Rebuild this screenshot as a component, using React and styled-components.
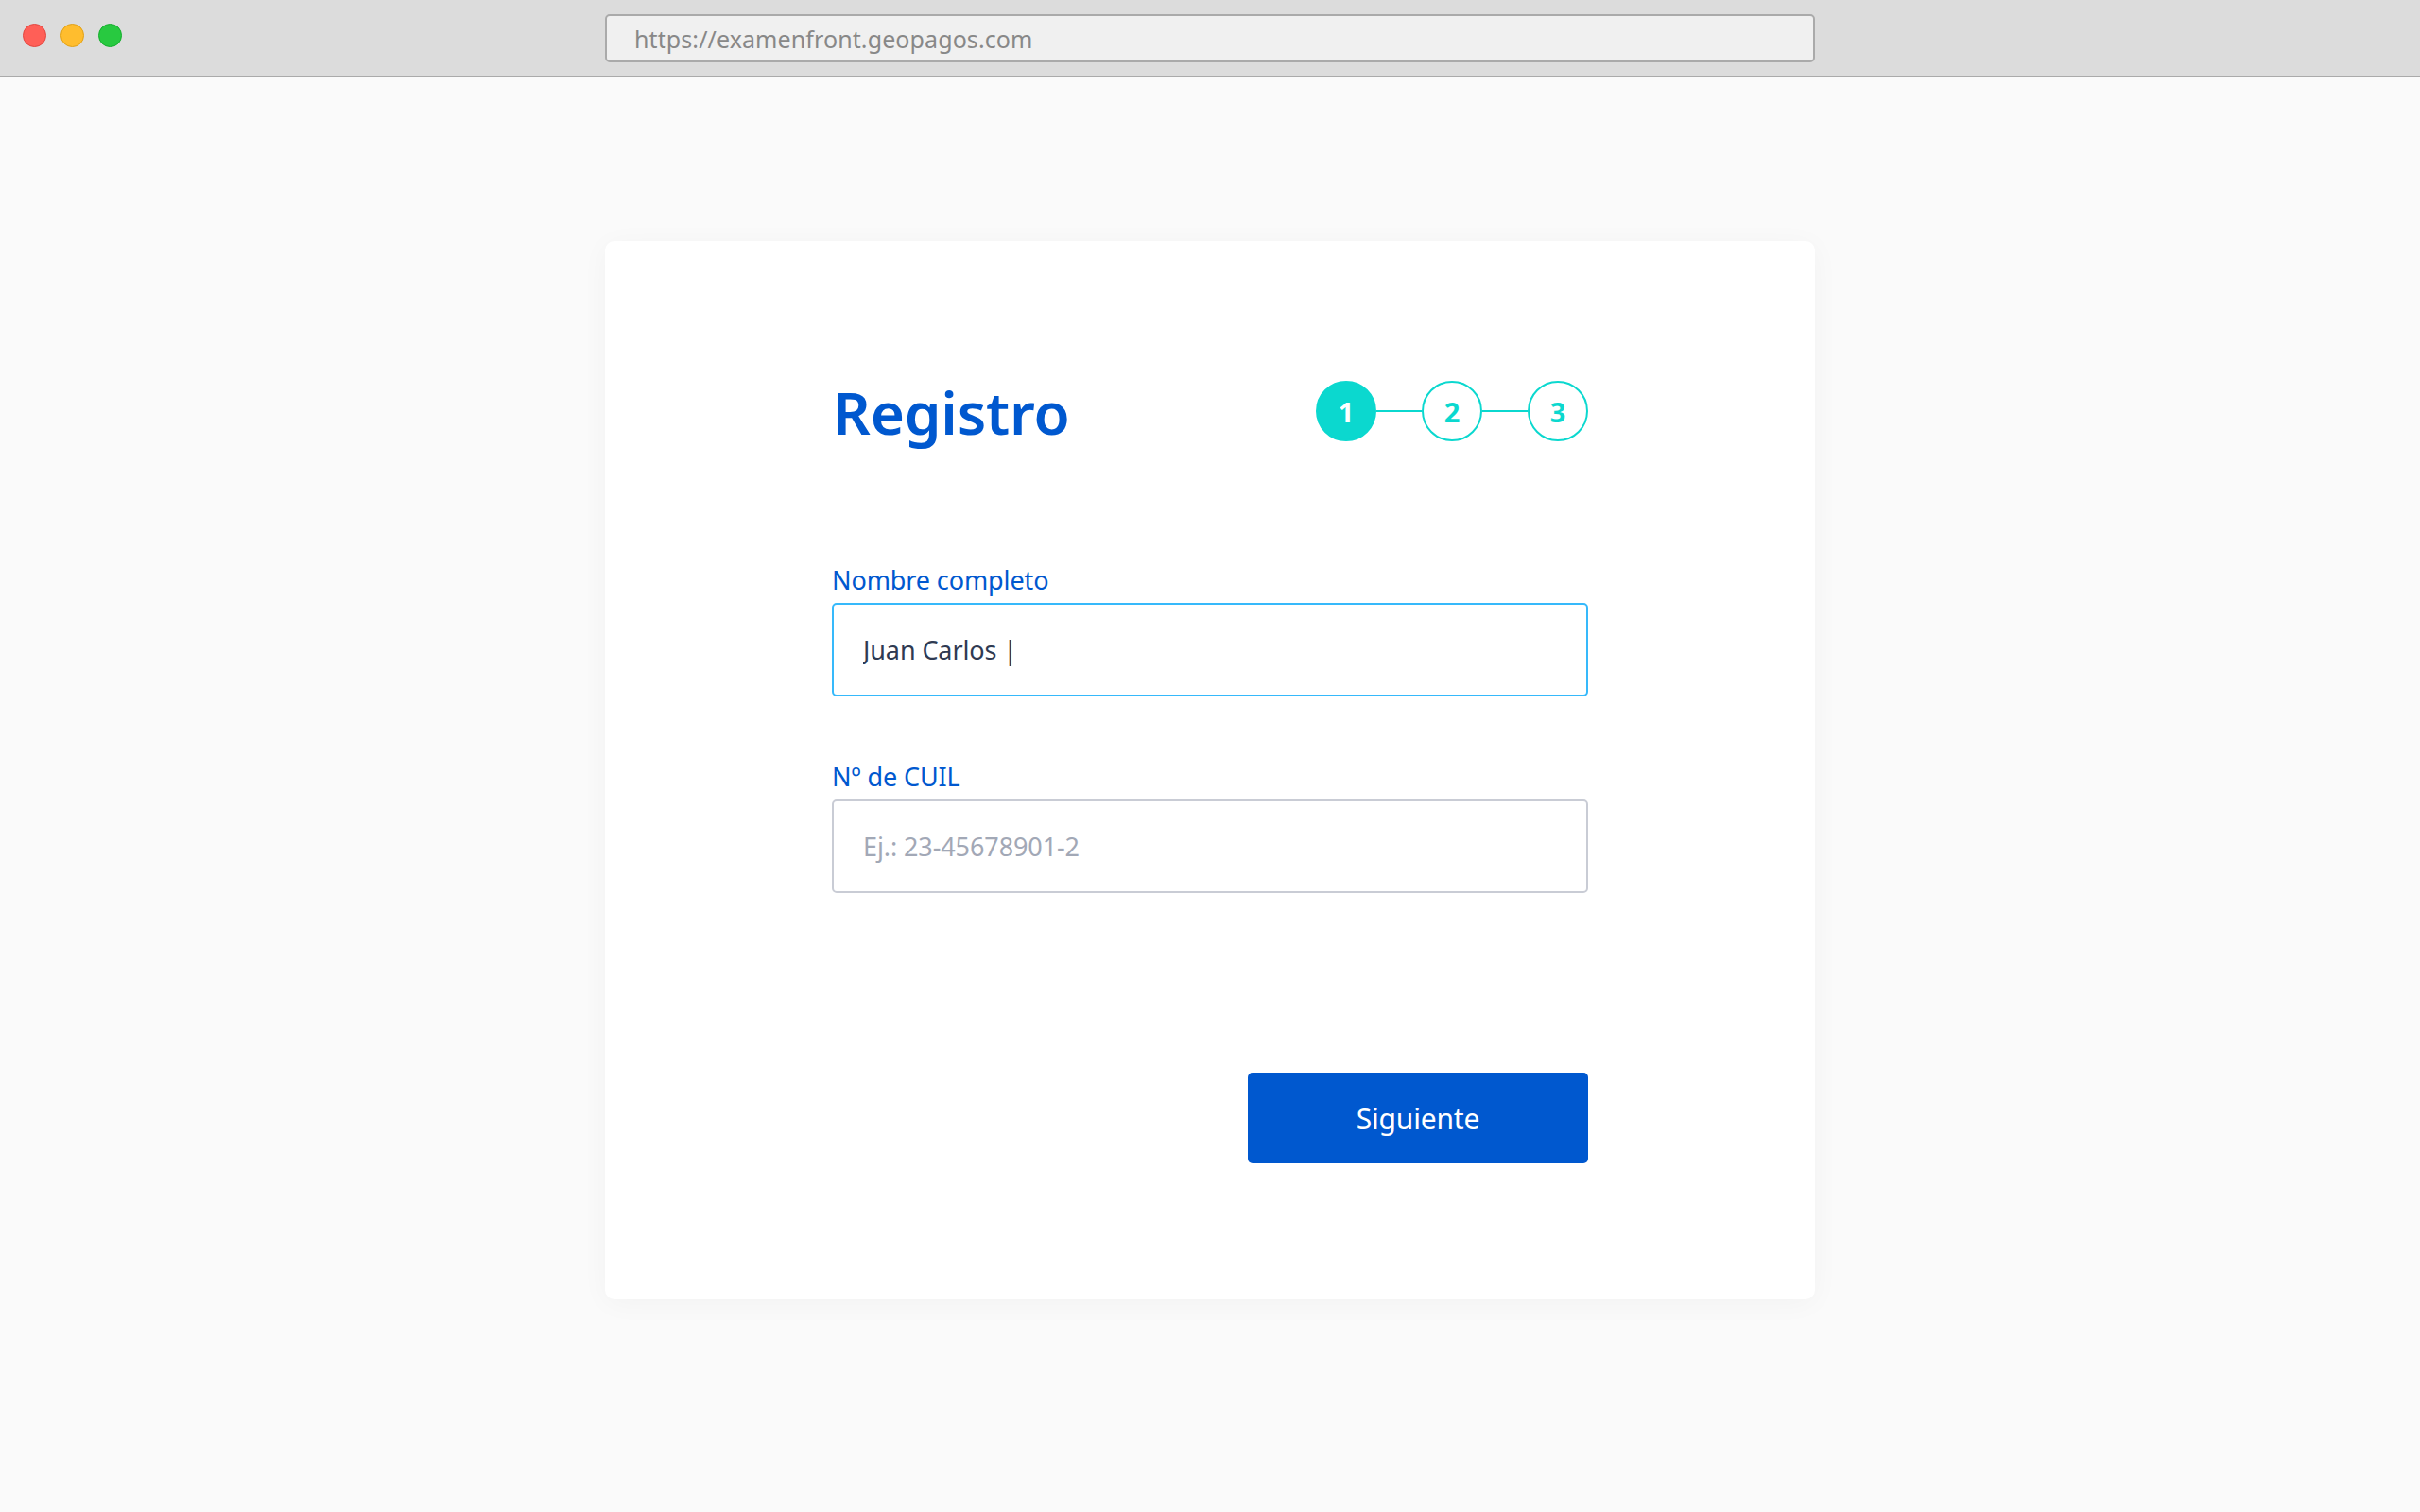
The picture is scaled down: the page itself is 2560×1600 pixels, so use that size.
import React from 'react'
import styled, { createGlobalStyle } from 'styled-components'

const blue = "#0058cf"
const teal = "#0bd8cf"
const uiFont = `"Noto Sans", "Open Sans", sans-serif`

const GlobalStyle = createGlobalStyle`
  html, body {
    margin: 0;
    padding: 0;
    background: #fafafa;
  }
  body {
    font-family: ${uiFont};
  }
  * { box-sizing: border-box; }
`

const Window = styled.div`
  width: 100%;
  min-height: 100vh;
  display: flex;
  flex-direction: column;
  background: #fafafa;
`

const TopBar = styled.div`
  height: 82px;
  background: #dcdcdc;
  border-bottom: 2px solid #aaaaaa;
  display: grid;
  grid-template-columns: 1fr 1280px 1fr;
  align-items: start;
`

const Lights = styled.div`
  display: flex;
  gap: 15px;
  padding-left: 24px;
  padding-top: 25px;
`

const Light = styled.span`
  width: 25px;
  height: 25px;
  border-radius: 50%;
  background: ${p => p.$fill};
  border: 1.5px solid ${p => p.$ring};
`

const UrlBar = styled.div`
  height: 51px;
  margin-top: 15px;
  background: #f0f0f0;
  border: 2px solid #aaaaaa;
  border-radius: 5px;
  display: flex;
  align-items: center;
  padding-left: 29px;
  font-family: ${uiFont};
  font-size: 25px;
  color: #888888;
  letter-spacing: 0.1px;
`

const Stage = styled.main`
  flex: 1;
  display: flex;
  justify-content: center;
  padding-top: 173px;
  padding-bottom: 200px;
`

const Card = styled.section`
  width: 1280px;
  height: 1120px;
  background: #ffffff;
  border-radius: 10px;
  box-shadow: 0 4px 30px rgba(0, 0, 0, 0.035);
  padding: 148px 240px 0;
  display: flex;
  flex-direction: column;
`

const HeaderRow = styled.div`
  height: 64px;
  display: flex;
  justify-content: space-between;
  align-items: center;
  margin-bottom: 130px;
`

const Title = styled.h1`
  margin: 0;
  font-family: ${uiFont};
  font-weight: 600;
  font-size: 62px;
  line-height: 64px;
  color: ${blue};
  letter-spacing: -0.2px;
  margin-left: 1px;
  transform: translateY(1px);
`

const Stepper = styled.div`
  display: flex;
  align-items: center;
`

const Step = styled.div`
  width: 64px;
  height: 64px;
  border-radius: 50%;
  border: 2px solid ${teal};
  background: ${p => p.$active ? teal : '#ffffff'};
  color: ${p => p.$active ? '#ffffff' : teal};
  display: flex;
  align-items: center;
  justify-content: center;
  font-family: ${uiFont};
  font-weight: 700;
  font-size: 29px;
`

const Connector = styled.div`
  width: 48px;
  height: 2px;
  background: ${teal};
`

const Field = styled.label`
  display: flex;
  flex-direction: column;
  margin-bottom: ${p => p.$gap || 0}px;
`

const Label = styled.span`
  font-family: ${uiFont};
  font-size: 27px;
  line-height: 34px;
  color: ${blue};
  margin-bottom: 7px;
  letter-spacing: -0.1px;
`

const Input = styled.input`
  height: 99px;
  width: 100%;
  border: 2px solid ${p => p.$focused ? '#36b9fb' : '#c9ccd5'};
  border-radius: 5px;
  padding: 0 31px;
  font-family: ${uiFont};
  font-size: 27px;
  color: #2f3a52;
  background: #ffffff;
  outline: none;
  letter-spacing: -0.1px;
  &::placeholder {
    color: #a2a8b6;
  }
`

const Actions = styled.div`
  display: flex;
  justify-content: flex-end;
`

const NextButton = styled.button`
  width: 360px;
  height: 96px;
  border: none;
  border-radius: 5px;
  background: ${blue};
  color: #ffffff;
  font-family: ${uiFont};
  font-size: 30px;
  letter-spacing: -0.2px;
  cursor: pointer;
`

export default function App() {
  return (
    <>
      <GlobalStyle />
      <Window>
        <TopBar>
          <Lights>
            <Light $fill="#ff5f57" $ring="#e2463f" />
            <Light $fill="#ffbd2e" $ring="#e1a116" />
            <Light $fill="#28c940" $ring="#14ae2c" />
          </Lights>
          <UrlBar>https://examenfront.geopagos.com</UrlBar>
          <div />
        </TopBar>

        <Stage>
          <Card>
            <HeaderRow>
              <Title>Registro</Title>
              <Stepper>
                <Step $active>1</Step>
                <Connector />
                <Step>2</Step>
                <Connector />
                <Step>3</Step>
              </Stepper>
            </HeaderRow>

            <Field $gap={68}>
              <Label>Nombre completo</Label>
              <Input $focused readOnly value="Juan Carlos |" />
            </Field>

            <Field $gap={190}>
              <Label>Nº de CUIL</Label>
              <Input placeholder="Ej.: 23-45678901-2" />
            </Field>

            <Actions>
              <NextButton type="button">Siguiente</NextButton>
            </Actions>
          </Card>
        </Stage>
      </Window>
    </>
  )
}
